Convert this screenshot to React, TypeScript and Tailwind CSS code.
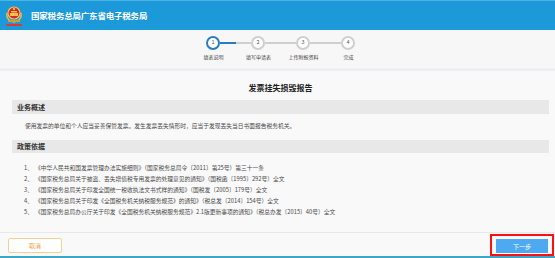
import React from "react";

const steps = ["填表说明", "填写申请表", "上传附报资料", "完成"];

const policies = [
  "《中华人民共和国发票管理办法实施细则》（国家税务总局令〔2011〕第25号）第三十一条",
  "《国家税务总局关于被盗、丢失增值税专用发票的处理意见的通知》（国税函〔1995〕292号）全文",
  "《国家税务总局关于印发全国统一税收执法文书式样的通知》（国税发〔2005〕179号）全文",
  "《国家税务总局关于印发《全国税务机关纳税服务规范》的通知》（税总发〔2014〕154号）全文",
  "《国家税务总局办公厅关于印发《全国税务机关纳税服务规范》2.1版更新事项的通知》（税总办发〔2015〕40号）全文",
];

const Emblem = () => (
  <svg width="18" height="24" viewBox="0 0 18 24">
    <path d="M2 9 Q1 15 6 17 L9 18 L12 17 Q17 15 16 9" fill="none" stroke="#e8b84a" strokeWidth="1.6" />
    <circle cx="9" cy="9" r="6" fill="#d8262a" stroke="#f2c14e" strokeWidth="1.2" />
    <rect x="5" y="9" width="8" height="3" fill="#f2c14e" />
    <rect x="6" y="7" width="6" height="1.5" fill="#f2c14e" />
    <circle cx="9" cy="5" r="1.2" fill="#f2c14e" />
    <rect x="3" y="16" width="12" height="2" fill="#c9a03a" />
    <rect x="1" y="20" width="16" height="2" rx="1" fill="#e2343a" />
  </svg>
);

const SectionBar = ({ title, className }: { title: string; className: string }) => (
  <div className={`flex shrink-0 items-center bg-[#e8e8e8] pl-[5px] text-[7px] font-bold text-[#333] ${className}`}>
    {title}
  </div>
);

export default function App() {
  return (
    <div
      className="flex h-[258px] w-[555px] flex-col overflow-hidden bg-[#f9f9f9]"
      style={{ fontFamily: '"Noto Sans CJK SC", "Noto Sans", sans-serif' }}
    >
      <header className="flex h-[30px] shrink-0 items-center border-t border-[#4fb3e6] bg-[#1b99d8] pl-[5px]">
        <Emblem />
        <span className="ml-[8px] text-[8.5px] font-bold tracking-[-0.2px] text-white">国家税务总局广东省电子税务局</span>
      </header>

      <div className="h-[38px] shrink-0 overflow-hidden bg-[#f7f7f7] pl-[191px] pt-[6px]">
        <div className="flex h-[14px] items-center pl-[15px]">
          {steps.map((s, i) => (
            <React.Fragment key={s}>
              <div
                className={`flex h-[14px] w-[14px] shrink-0 items-center justify-center rounded-full border-2 bg-white text-[5.5px] leading-none text-[#555] ${
                  i === 0 ? "border-[#2a7cc0]" : "border-[#cfcfcf]"
                }`}
              >
                {i + 1}
              </div>
              {i < steps.length - 1 && (
                <div className="flex h-[2px] w-[31px]">
                  <div className={`h-full w-1/2 ${i === 0 ? "bg-[#2a7cc0]" : "bg-[#cfcfcf]"}`} />
                  <div className="h-full w-1/2 bg-[#cfcfcf]" />
                </div>
              )}
            </React.Fragment>
          ))}
        </div>
        <div className="mt-[3px] flex h-[7px]">
          {steps.map((s) => (
            <div key={s} className="w-[45px] text-center text-[5px] leading-[7px] text-[#444]">
              {s}
            </div>
          ))}
        </div>
      </div>

      <div className="h-[3px] shrink-0 bg-[#edf0f3]" />

      <main className="flex h-[161px] shrink-0 flex-col overflow-hidden pl-[12px] pr-[6px]">
        <h1 className="mt-[12px] h-[10px] shrink-0 text-center text-[8px] font-bold leading-[10px] text-[#222]">
          发票挂失损毁报告
        </h1>
        <SectionBar title="业务概述" className="mt-[7px] h-[14px]" />
        <p className="mt-[8px] h-[8px] shrink-0 pl-[13px] text-[5.75px] leading-[8px] text-[#4a4a4a]">
          使用发票的单位和个人应当妥善保管发票。发生发票丢失情形时，应当于发现丢失当日书面报告税务机关。
        </p>
        <SectionBar title="政策依据" className="mt-[10px] h-[13px]" />
        <ol className="mt-[9px] pl-[12px]">
          {policies.map((p, i) => (
            <li key={i} className="flex h-[11px] items-center text-[5.75px] leading-[11px] text-[#4a4a4a]">
              <span className="w-[11px] shrink-0">{i + 1}、</span>
              <span className="whitespace-nowrap">{p}</span>
            </li>
          ))}
        </ol>
      </main>

      <footer className="flex h-[24px] shrink-0 items-start justify-between border-t border-[#e8e8e8] bg-[#f9f9f9] pl-[8px] pr-[1px]">
        <button className="mt-[5px] h-[15px] w-[54px] rounded-[2px] border border-[#f7cf96] bg-white text-[6px] text-[#f0a04b]">
          取消
        </button>
        <div className="mt-[1px] border-2 border-[#ff1010] px-[4px] pb-[1px] pt-[3px]">
          <button className="block h-[14px] w-[52px] bg-[#4eaaf0] text-[6px] text-white">下一步</button>
        </div>
      </footer>
      <div className="h-[2px] shrink-0 bg-[#3aa6c8]" />
    </div>
  );
}
